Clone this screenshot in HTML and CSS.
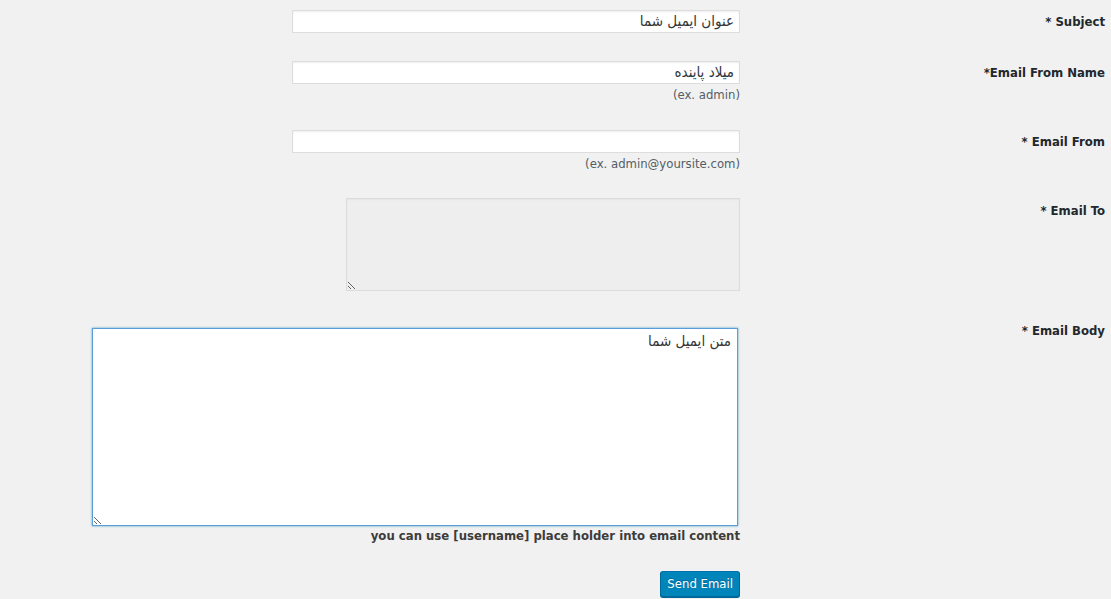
FILE: index.html
```html
<!DOCTYPE html>
<html lang="fa" dir="ltr">
<head>
<meta charset="utf-8">
<title>Send Email</title>
<link rel="stylesheet" href="styles.css">
</head>
<body>
<form class="form">
  <div class="row row-first">
    <div class="th">* Subject</div>
    <div class="td">
      <input class="field" type="text" dir="rtl" value="عنوان ایمیل شما">
    </div>
  </div>
  <div class="row">
    <div class="th">*Email From Name</div>
    <div class="td">
      <input class="field" type="text" dir="rtl" value="میلاد پاینده">
      <p class="desc">(ex. admin)</p>
    </div>
  </div>
  <div class="row">
    <div class="th">* Email From</div>
    <div class="td">
      <input class="field" type="text" dir="rtl" value="">
      <p class="desc">(ex. admin@yoursite.com)</p>
    </div>
  </div>
  <div class="row">
    <div class="th">* Email To</div>
    <div class="td">
      <textarea class="area area-to" dir="rtl" disabled></textarea>
    </div>
  </div>
  <div class="row row-last">
    <div class="th">* Email Body</div>
    <div class="td">
      <textarea class="area area-body" dir="rtl">متن ایمیل شما</textarea>
      <p class="note">you can use [username] place holder into email content</p>
      <div class="actions"><button class="button" type="button">Send Email</button></div>
    </div>
  </div>
</form>
</body>
</html>
```
FILE: styles.css
```css
html, body {
  margin: 0;
  padding: 0;
  background: #f1f1f1;
}
body {
  font-family: "DejaVu Sans Condensed", "DejaVu Sans", sans-serif;
  font-stretch: condensed;
  font-size: 13px;
  color: #444;
  height: 599px;
  overflow: hidden;
}
.form {
  padding-right: 6px;
}
.row {
  display: flex;
  flex-direction: row-reverse;
  align-items: flex-start;
  padding: 14px 0;
}
.row-first {
  padding-top: 10px;
}
.th {
  width: 365px;
  flex: none;
  padding-top: 4px;
  text-align: right;
  font-weight: bold;
  font-size: 13px;
  line-height: 16px;
  color: #23282d;
}
.td {
  flex: 1;
  display: flex;
  flex-direction: column;
  align-items: flex-end;
}
.field {
  box-sizing: border-box;
  width: 448px;
  height: 23px;
  margin: 0;
  padding: 1px 5px 2px;
  border: 1px solid #ddd;
  background: #fff;
  box-shadow: inset 0 1px 2px rgba(0, 0, 0, .07);
  font-family: "DejaVu Sans Condensed", "DejaVu Sans", sans-serif;
  font-size: 15px;
  color: #32373c;
  outline: none;
}
.desc {
  margin: 3px 0 -1px;
  font-size: 13px;
  line-height: 16px;
  color: #555d66;
}
.area {
  display: block;
  box-sizing: border-box;
  margin: 0;
  font-family: "DejaVu Sans Condensed", "DejaVu Sans", sans-serif;
  font-size: 15px;
  color: #32373c;
  outline: none;
}
.area-to {
  width: 394px;
  height: 93px;
  margin-top: -1px;
  border: 1px solid #dcdcdc;
  background: #eeeeee;
  box-shadow: inset 0 1px 2px rgba(0, 0, 0, .04);
}
.area-body {
  width: 646px;
  height: 198px;
  margin-top: 9px;
  margin-right: 2px;
  padding: 3px 6px;
  border: 1px solid #5b9dd9;
  background: #fff;
  box-shadow: 0 0 2px rgba(30, 140, 190, .8);
  line-height: 19px;
}
.note {
  margin: 2px 0 0;
  font-weight: bold;
  font-size: 13px;
  line-height: 16px;
  color: #3c3c3c;
}
.actions {
  margin-top: 27px;
}
.button {
  box-sizing: border-box;
  height: 26px;
  margin: 0;
  padding: 0 6px;
  border: 1px solid #0073aa;
  border-color: #0073aa #006799 #006799;
  border-radius: 3px;
  background: #0085ba;
  box-shadow: 0 1px 0 #006799;
  color: #fff;
  font-family: "DejaVu Sans Condensed", "DejaVu Sans", sans-serif;
  font-size: 13px;
  line-height: 24px;
  text-shadow: 0 -1px 1px #006799;
  cursor: pointer;
}
```
